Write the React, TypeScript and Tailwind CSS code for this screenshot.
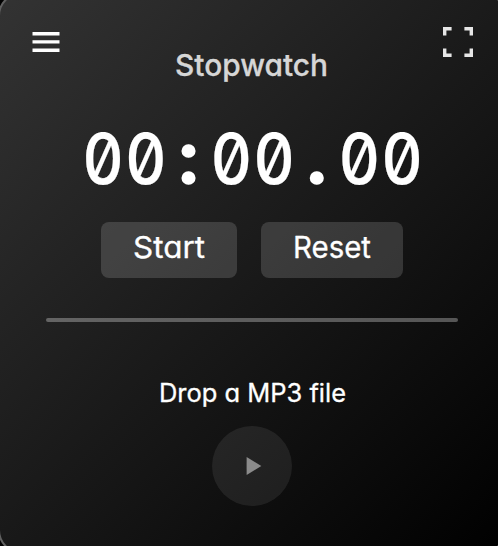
const label = "font-['Inter','Lato',sans-serif] [font-feature-settings:'cv11'] whitespace-nowrap";

function Fit({ text, width, className }: { text: string; width: number; className: string }) {
  return (
    <svg width={width} height="48" viewBox={`0 0 ${width} 48`} className={`overflow-visible ${label} ${className}`}>
      <text x="0" y="34" textLength={width} lengthAdjust="spacingAndGlyphs" fill="currentColor" stroke="currentColor" strokeWidth="0.3" strokeLinejoin="round">
        {text}
      </text>
    </svg>
  );
}

export default function App() {
  return (
    <div className="h-[546px] w-[498px] overflow-hidden bg-black">
      <div className="-mt-[8px] -ml-[2px] h-[562px] w-[508px] rounded-[24px] border-2 border-[#606060] bg-[linear-gradient(135deg,#333,#000)] text-white">
        <div className="flex h-[122px] items-start justify-between pt-[33px] pr-[31px] pl-8">
          <svg width="28" height="20" viewBox="0 0 28 20" className="mt-[5px]" fill="white">
            <path d="M.5 0h27v3.5H.5zM.5 8.3h27v3.3H.5zM.5 16.4h27v3.6H.5z" />
          </svg>
          <div className="mt-[15px] -ml-px text-[#d6d6d6]">
            <Fit text="Stopwatch" width={153} className="text-[30px] font-medium" />
          </div>
          <svg width="30" height="30" viewBox="0 0 30 30" fill="none" stroke="#e6e6e6" strokeWidth="3.4">
            <path d="M1.7 8.6V1.7h6.9M21.4 1.7h6.9v6.9M28.3 21.4v6.9h-6.9M8.6 28.3H1.7v-6.9" />
          </svg>
        </div>
        <div className="flex h-[106px] justify-center">
          <svg width="340" height="72" viewBox="0 0 340 72" fill="white" stroke="white" strokeLinejoin="round" className="overflow-visible font-['Inter',sans-serif] text-[70px] font-medium [font-feature-settings:'zero']">
            {[..."00:00.00"].map((c, i) => (
              <text key={i} textAnchor="middle" strokeWidth={c === "0" ? 0.2 : 3.4} transform={`translate(${21.2 + i * 42.7} ${c === "0" ? 67.6 : 66.3}) scale(${c === "0" ? 0.9 : 1.04} 1)`}>
                {c}
              </text>
            ))}
          </svg>
        </div>
        <div className="flex justify-center gap-6">
          <button className="flex h-14 w-[136px] justify-center rounded-lg bg-white/15 pt-[2px]">
            <Fit text="Start" width={72} className="text-[30px]" />
          </button>
          <button className="flex h-14 w-[142px] justify-center rounded-lg bg-white/15 pt-[2px]">
            <Fit text="Reset" width={78} className="text-[30px]" />
          </button>
        </div>
        <div className="mx-auto mt-10 h-1 w-[412px] rounded-full bg-white/30" />
        <div className="mt-[46px] flex h-[58px] justify-center">
          <Fit text="Drop a MP3 file" width={187} className="text-[25px]" />
        </div>
        <div className="mx-auto flex size-20 items-center justify-center rounded-full bg-white/8">
          <svg width="16" height="20" viewBox="0 0 16 20" className="ml-[3px]" fill="#8b8b8b">
            <path d="M.6 1l14.7 9L.6 19z" />
          </svg>
        </div>
      </div>
    </div>
  );
}
